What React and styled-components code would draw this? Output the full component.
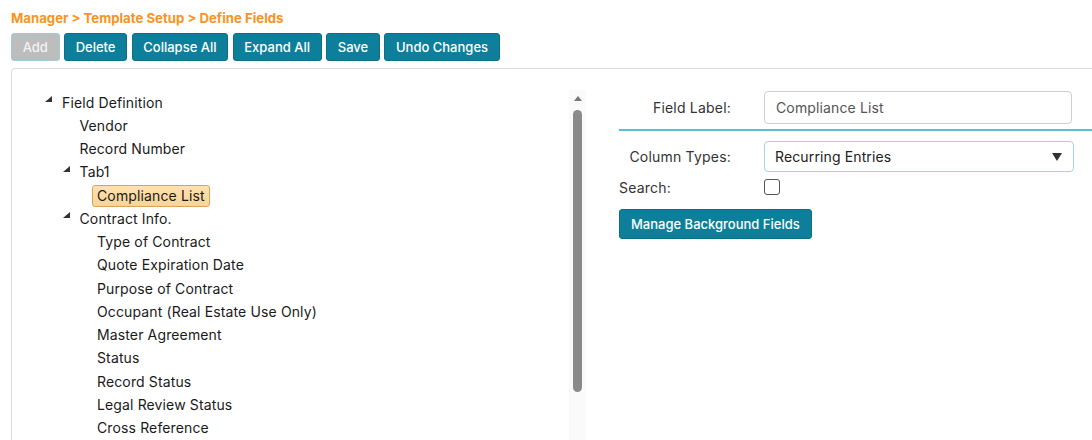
import React from 'react'
import styled, { createGlobalStyle } from 'styled-components'

const GlobalStyle = createGlobalStyle`
  html, body {
    margin: 0;
    padding: 0;
    background: #fff;
    font-family: Inter, "Noto Sans", sans-serif;
    overflow: hidden;
  }
`

const tree = [
  { label: 'Field Definition', level: 0, toggle: true },
  { label: 'Vendor', level: 1 },
  { label: 'Record Number', level: 1 },
  { label: 'Tab1', level: 1, toggle: true },
  { label: 'Compliance List', level: 2, selected: true },
  { label: 'Contract Info.', level: 1, toggle: true },
  { label: 'Type of Contract', level: 2 },
  { label: 'Quote Expiration Date', level: 2 },
  { label: 'Purpose of Contract', level: 2 },
  { label: 'Occupant (Real Estate Use Only)', level: 2 },
  { label: 'Master Agreement', level: 2 },
  { label: 'Status', level: 2 },
  { label: 'Record Status', level: 2 },
  { label: 'Legal Review Status', level: 2 },
  { label: 'Cross Reference', level: 2 },
]

const App = () => {
  return (
    <Page>
      <GlobalStyle />
      <Breadcrumb>Manager &gt; Template Setup &gt; Define Fields</Breadcrumb>
      <Toolbar>
        <Button disabled>Add</Button>
        <Button>Delete</Button>
        <Button>Collapse All</Button>
        <Button>Expand All</Button>
        <Button>Save</Button>
        <Button>Undo Changes</Button>
      </Toolbar>
      <Panel>
        <TreePane>
          <TreeList>
            {tree.map((node) => (
              <Row key={node.label} $level={node.level}>
                <Toggle>{node.toggle && <Triangle />}</Toggle>
                <Label $selected={node.selected}>{node.label}</Label>
              </Row>
            ))}
          </TreeList>
          <Scrollbar>
            <ScrollArrow />
            <Thumb />
          </Scrollbar>
        </TreePane>
        <Form>
          <FieldRow>
            <FieldName>Field Label:</FieldName>
            <TextInput defaultValue="Compliance List" />
          </FieldRow>
          <Divider />
          <FieldRow $select>
            <FieldName>Column Types:</FieldName>
            <Select>
              <span>Recurring Entries</span>
              <Caret />
            </Select>
          </FieldRow>
          <SearchRow>
            <SearchLabel>Search:</SearchLabel>
            <Checkbox type="checkbox" />
          </SearchRow>
          <Button $wide>Manage Background Fields</Button>
        </Form>
      </Panel>
    </Page>
  )
}

const Page = styled.div`
  padding: 10px 0 0 11px;
  height: 430px;
  display: flex;
  flex-direction: column;
`

const Breadcrumb = styled.div`
  color: #f7941d;
  font-weight: 700;
  font-size: 13.2px;
  line-height: 16px;
  margin-bottom: 7px;
`

const Toolbar = styled.div`
  display: flex;
  gap: 4.4px;
  margin-bottom: 7px;
`

const Button = styled.button`
  font-family: Inter, "Noto Sans", sans-serif;
  font-size: 13px;
  font-weight: 500;
  height: ${(p) => (p.$wide ? '30px' : '28px')};
  padding: 0 ${(p) => (p.$wide ? '11px' : '10.7px')};
  border-radius: 3px;
  border: 1px solid ${(p) => (p.disabled ? '#9fcbd6' : '#0a6f87')};
  background: ${(p) => (p.disabled ? '#bdbdbd' : '#0e7f9a')};
  color: ${(p) => (p.disabled ? '#f2f2f2' : '#fff')};
  align-self: flex-start;
  cursor: pointer;
`

const Panel = styled.div`
  flex: 1;
  display: flex;
  border-top: 1px solid #dcdcdc;
  border-left: 1px solid #dcdcdc;
  border-top-left-radius: 4px;
  min-height: 0;
`

const TreePane = styled.div`
  width: 574px;
  display: flex;
  padding-top: 22px;
`

const TreeList = styled.div`
  flex: 1;
  padding-left: 33px;
`

const Row = styled.div`
  display: flex;
  align-items: center;
  height: 23.25px;
  padding-left: ${(p) => p.$level * 17.5}px;
  font-size: 14px;
  letter-spacing: 0.13px;
  color: #1a1a1a;
`

const Toggle = styled.span`
  width: 17px;
  height: 100%;
  display: flex;
  align-items: flex-start;
  padding-top: 5px;
  box-sizing: border-box;
`

const Triangle = styled.span`
  width: 0;
  height: 0;
  border-left: 7px solid transparent;
  border-bottom: 6px solid #333;
`

const Label = styled.span`
  line-height: 20px;
  padding: 0 ${(p) => (p.$selected ? '4px' : '0')};
  margin-left: ${(p) => (p.$selected ? '-5px' : '0')};
  border: ${(p) => (p.$selected ? '1px solid #d4a45c' : 'none')};
  border-radius: 3px;
  background: ${(p) =>
    p.$selected ? 'linear-gradient(#ffe2b0, #fcd394)' : 'transparent'};
`

const Scrollbar = styled.div`
  width: 17px;
  margin-top: -1px;
  background: #fafafa;
  display: flex;
  flex-direction: column;
  align-items: center;
`

const ScrollArrow = styled.span`
  margin-top: 6px;
  width: 0;
  height: 0;
  border-left: 4px solid transparent;
  border-right: 4px solid transparent;
  border-bottom: 5px solid #777;
`

const Thumb = styled.span`
  margin-top: 9px;
  width: 9px;
  height: 282px;
  border-radius: 5px;
  background: #8a8a8a;
`

const Form = styled.div`
  flex: 1;
  padding: 22px 0 0 33px;
  display: flex;
  flex-direction: column;
`

const FieldRow = styled.div`
  display: grid;
  grid-template-columns: 145px ${(p) => (p.$select ? '310px' : '308px')};
  align-items: center;
  margin-top: ${(p) => (p.$select ? '10px' : '0')};
`

const FieldName = styled.label`
  font-size: 14px;
  letter-spacing: 0.2px;
  color: #333;
  text-align: right;
  padding-right: 33px;
`

const TextInput = styled.input`
  font-family: Inter, "Noto Sans", sans-serif;
  font-size: 14px;
  letter-spacing: 0.13px;
  color: #555;
  height: 33px;
  box-sizing: border-box;
  border: 1px solid #cfcfcf;
  border-radius: 4px;
  padding: 0 11px;
  outline: none;
`

const Divider = styled.div`
  height: 2px;
  background: #5bbcd8;
  margin-top: 5px;
`

const Select = styled.div`
  height: 31px;
  box-sizing: border-box;
  border: 1px solid #a9d3e3;
  border-radius: 4px;
  padding: 0 10px;
  display: flex;
  align-items: center;
  justify-content: space-between;
  font-size: 14px;
  letter-spacing: 0.13px;
  color: #222;
`

const Caret = styled.span`
  width: 0;
  height: 0;
  border-left: 5px solid transparent;
  border-right: 5px solid transparent;
  border-top: 8px solid #333;
  margin-right: 1px;
`

const SearchRow = styled.div`
  display: grid;
  grid-template-columns: 145px auto;
  align-items: center;
  height: 22px;
  margin-top: 4px;
  margin-bottom: 11px;
`

const SearchLabel = styled.label`
  font-size: 14px;
  letter-spacing: 0.2px;
  color: #333;
`

const Checkbox = styled.input`
  appearance: none;
  margin: 0;
  width: 16px;
  height: 16px;
  border: 1px solid #555;
  border-radius: 3px;
  background: #fff;
`

export default App
